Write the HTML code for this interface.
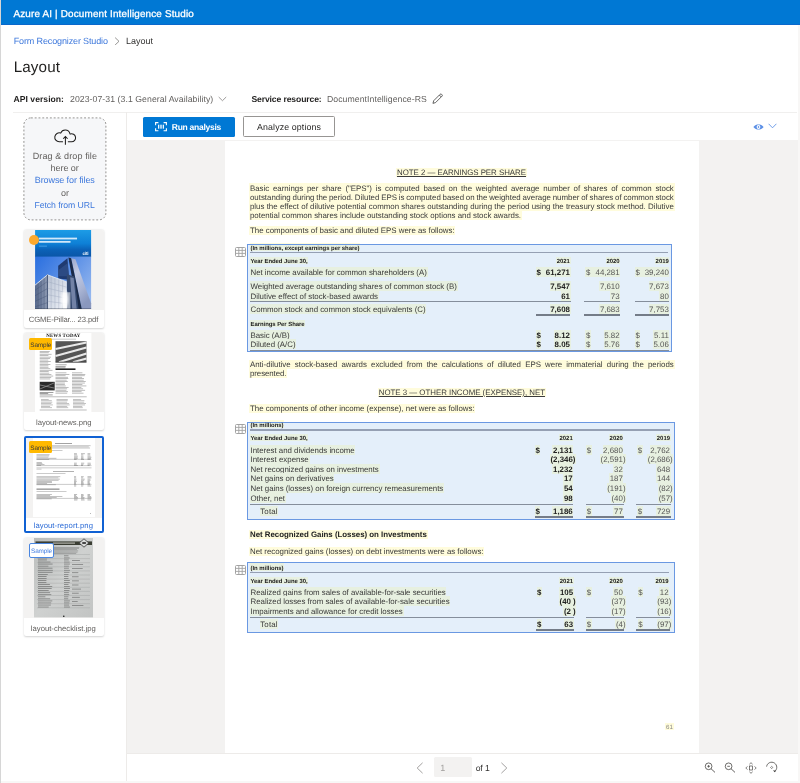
<!DOCTYPE html>
<html lang="en"><head><meta charset="utf-8"><title>Layout - Document Intelligence Studio</title>
<style>
html,body{margin:0;padding:0}
body{width:800px;height:783px;overflow:hidden;background:#f8f7f6;position:relative;font-family:"Liberation Sans",sans-serif}
.t{position:absolute;white-space:nowrap;text-rendering:geometricPrecision}
.b,svg{position:absolute}
.hl{position:absolute;background:#fffcdc}
.hg{position:absolute;background:#e7f0e0}
.tb{position:absolute;background:#e4effa;border:1px solid #6a98e2;box-sizing:border-box}
.r1{position:absolute;height:1px;background:#858e9b}
.r0{position:absolute;height:1.5px;background:#95a0b3}
.r2{position:absolute;height:1.8px;background:#747c88}
.card{position:absolute;background:#fff;border-radius:2px;box-shadow:0 0.5px 2px rgba(0,0,0,.18);overflow:hidden}
.ti{position:absolute;left:0;right:0;top:0;background:#f3f2f1}
.badge{position:absolute;border-radius:1.5px;box-sizing:border-box}
</style></head><body>
<div id="app" style="position:absolute;left:0;top:0;width:800px;height:783px;will-change:transform">
<div class="b" style="left:0;top:0;width:1px;height:783px;background:#d6d6d6"></div>
<div class="b" style="left:1px;top:0;width:796.5px;height:781px;background:#fff"></div>
<!-- header -->
<div class="b" style="left:1px;top:0;width:799px;height:25px;background:#0078d4;border-bottom:1px solid #0a68cc;box-sizing:border-box"></div>
<!-- dividers -->
<div class="b" style="left:13px;top:111.5px;width:784px;height:1px;background:#f0efee"></div>
<div class="b" style="left:126px;top:112px;width:1px;height:669px;background:#edebe9"></div>
<!-- viewer -->
<div class="b" style="left:127px;top:140.3px;width:670.5px;height:612.7px;background:#f3f2f1"></div>
<div class="b" style="left:225px;top:141px;width:473.5px;height:612px;background:#fff"></div>
<div class="b" style="left:127px;top:752.5px;width:670.5px;height:1px;background:#edebe9"></div>
<div class="hl" style="left:249.7px;top:242.6px;width:110.6px;height:2.2px"></div>
<div class="tb" style="left:247px;top:244.3px;width:425.1px;height:107.4px"></div>
<svg style="left:235px;top:246.5px" width="11" height="10" viewBox="0 0 11 10"><rect x="0.5" y="0.5" width="10" height="9" rx="1" fill="#fff" stroke="#a3a3a3" stroke-width="1"/><path d="M0.5 3.4H10.5M0.5 6.4H10.5M3.8 0.5V9.5M7.2 0.5V9.5" stroke="#a3a3a3" stroke-width="0.9" fill="none"/></svg>
<div class="hg" style="left:249.7px;top:245.3px;width:110.6px;height:6.2px"></div>
<div class="r0" style="left:250px;top:251.55px;width:418px"></div>
<div class="hg" style="left:536.6px;top:267.3px;width:23.299999999999955px;height:9.4px"></div>
<div class="hg" style="left:585.9px;top:267.3px;width:23.700000000000045px;height:9.4px"></div>
<div class="hg" style="left:635.4px;top:267.3px;width:23.399999999999977px;height:9.4px"></div>
<div class="r1" style="left:250px;top:301.1px;width:320.5px"></div>
<div class="r1" style="left:584.4px;top:301.1px;width:36.10000000000002px"></div>
<div class="r1" style="left:635px;top:301.1px;width:34px"></div>
<div class="r2" style="left:535.6px;top:314.2px;width:34.89999999999998px"></div>
<div class="r2" style="left:584.4px;top:314.2px;width:36.10000000000002px"></div>
<div class="r2" style="left:635px;top:314.2px;width:34px"></div>
<div class="r1" style="left:250px;top:349.8px;width:419px"></div>
<div class="hl" style="left:249.7px;top:420.2px;width:34.700000000000024px;height:2.5px"></div>
<div class="tb" style="left:247px;top:422.2px;width:427.5px;height:98.2px"></div>
<svg style="left:235px;top:423.9px" width="11" height="10" viewBox="0 0 11 10"><rect x="0.5" y="0.5" width="10" height="9" rx="1" fill="#fff" stroke="#a3a3a3" stroke-width="1"/><path d="M0.5 3.4H10.5M0.5 6.4H10.5M3.8 0.5V9.5M7.2 0.5V9.5" stroke="#a3a3a3" stroke-width="0.9" fill="none"/></svg>
<div class="hg" style="left:249.7px;top:423.2px;width:34.700000000000024px;height:5.3px"></div>
<div class="r0" style="left:250px;top:429.25px;width:419.70000000000005px"></div>
<div class="r1" style="left:250px;top:503.7px;width:323.29999999999995px"></div>
<div class="r1" style="left:585.7px;top:503.7px;width:38.09999999999991px"></div>
<div class="r1" style="left:636px;top:503.7px;width:34.60000000000002px"></div>
<div class="r2" style="left:534.7px;top:516.3px;width:38.799999999999955px"></div>
<div class="r2" style="left:585.7px;top:516.3px;width:38.09999999999991px"></div>
<div class="r2" style="left:636px;top:516.3px;width:34.60000000000002px"></div>
<div class="hl" style="left:249.7px;top:562.4px;width:34.700000000000024px;height:0.3px"></div>
<div class="tb" style="left:247px;top:562.2px;width:427.5px;height:70.5px"></div>
<svg style="left:235px;top:564.5px" width="11" height="10" viewBox="0 0 11 10"><rect x="0.5" y="0.5" width="10" height="9" rx="1" fill="#fff" stroke="#a3a3a3" stroke-width="1"/><path d="M0.5 3.4H10.5M0.5 6.4H10.5M3.8 0.5V9.5M7.2 0.5V9.5" stroke="#a3a3a3" stroke-width="0.9" fill="none"/></svg>
<div class="hg" style="left:249.7px;top:563.2px;width:34.700000000000024px;height:7.9px"></div>
<div class="r0" style="left:250px;top:571.55px;width:418.5px"></div>
<div class="r1" style="left:250px;top:616.8px;width:323.5px"></div>
<div class="r1" style="left:585.7px;top:616.8px;width:38.09999999999991px"></div>
<div class="r1" style="left:636px;top:616.8px;width:33.5px"></div>
<div class="r2" style="left:535.5px;top:629.4px;width:38.5px"></div>
<div class="r2" style="left:585.7px;top:629.4px;width:38.09999999999991px"></div>
<div class="r2" style="left:636px;top:629.4px;width:33.5px"></div>
<svg style="left:113.5px;top:36.6px" width="6" height="8.6" viewBox="0 0 6 8.6"><path d="M1.1 0.6L5 4.3L1.1 8" fill="none" stroke="#7a7876" stroke-width="0.8"/></svg>
<svg style="left:217.5px;top:95.9px" width="9" height="6" viewBox="0 0 9 6"><path d="M0.7 1L4.45 4.7L8.2 1" fill="none" stroke="#8a8886" stroke-width="0.85"/></svg>
<svg style="left:431.5px;top:92.9px" width="11.3" height="11.3" viewBox="0 0 12 12"><path d="M1 11L1.8 8.2L8.6 1.4a1.1 1.1 0 0 1 1.6 0l0.4 0.4a1.1 1.1 0 0 1 0 1.6L3.8 10.2Z M7.8 2.2L9.8 4.2" fill="none" stroke="#323130" stroke-width="0.8" stroke-linejoin="round"/></svg>
<div class="b" style="left:143px;top:116.5px;width:92px;height:20px;background:#0078d4;border-radius:1.5px"></div>
<svg style="left:155.4px;top:122.2px" width="12" height="9.4" viewBox="0 0 12 9.4"><path d="M0.6 3.2V0.6H3.4M8.6 0.6H11.4V3.2M11.4 6.2V8.8H8.6M3.4 8.8H0.6V6.2" fill="none" stroke="#fff" stroke-width="1.1"/><path d="M3.5 2.7V6.7M5.2 2.7V6.7M6.8 2.7V6.7M8.5 2.7V6.7" stroke="#fff" stroke-width="0.95"/></svg>
<div class="b" style="left:243.3px;top:116.4px;width:91.6px;height:20.2px;background:#fff;border:1px solid #979593;border-radius:1.5px;box-sizing:border-box"></div>
<svg style="left:753px;top:123.5px" width="11" height="6" viewBox="0 0 11 6"><path d="M0.4 3C2 1 3.6 0.45 5.5 0.45S9 1 10.6 3C9 5 7.4 5.55 5.5 5.55S2 5 0.4 3Z" fill="#5b8fe6"/><circle cx="5.5" cy="3" r="1.9" fill="#fff"/><circle cx="5.5" cy="3" r="0.75" fill="#2f6fd8"/></svg>
<svg style="left:768px;top:123.4px" width="9" height="6" viewBox="0 0 9 6"><path d="M0.6 0.8L4.5 4.8L8.4 0.8" fill="none" stroke="#4f86e2" stroke-width="0.8"/></svg>
<svg style="left:23px;top:116.5px" width="84" height="104" viewBox="0 0 84 104"><rect x="0.9" y="0.9" width="82" height="102" rx="7" fill="#f6f7f9" stroke="#8a8886" stroke-width="0.9" stroke-dasharray="1.9 1.9"/></svg>
<svg style="left:45px;top:122px" width="40" height="30" viewBox="0 0 40 30"><path d="M17.6 19.75H14.2A4.45 4.45 0 1 1 15.7 11.1A4.9 4.9 0 0 1 24.9 11.5L25.2 12A4 4 0 1 1 26.6 19.75H23.3" fill="none" stroke="#201f1e" stroke-width="1.05" stroke-linecap="round"/><path d="M20.4 22.75V14.9M18.2 16.75L20.4 14.55L22.6 16.75" fill="none" stroke="#201f1e" stroke-width="1.05"/></svg>
<svg style="left:416px;top:761.5px" width="8" height="12" viewBox="0 0 8 12"><path d="M6.6 0.8L1.2 6L6.6 11.2" fill="none" stroke="#8a8886" stroke-width="0.8"/></svg>
<svg style="left:500px;top:761.5px" width="8" height="12" viewBox="0 0 8 12"><path d="M1.4 0.8L6.8 6L1.4 11.2" fill="none" stroke="#8a8886" stroke-width="0.8"/></svg>
<div class="b" style="left:434px;top:757px;width:38px;height:20.3px;background:#f3f2f1;border-radius:1.5px"></div>
<svg style="left:702px;top:760px" width="16" height="15" viewBox="0 0 16 15"><circle cx="6.6" cy="6.3" r="3.35" fill="none" stroke="#484644" stroke-width="0.8"/><path d="M9 8.7L13 12.4" stroke="#484644" stroke-width="0.85"/><path d="M5.3 6.3H7.9M6.6 5V7.6" stroke="#484644" stroke-width="0.8"/></svg>
<svg style="left:722.3px;top:760px" width="16" height="15" viewBox="0 0 16 15"><circle cx="6.6" cy="6.3" r="3.35" fill="none" stroke="#484644" stroke-width="0.8"/><path d="M9 8.7L13 12.4" stroke="#484644" stroke-width="0.85"/><path d="M5.3 6.3H7.9" stroke="#484644" stroke-width="0.8"/></svg>
<svg style="left:745px;top:762px" width="12" height="12" viewBox="0 0 12 12"><rect x="4.4" y="4" width="3.2" height="4" fill="none" stroke="#484644" stroke-width="0.7"/><path d="M2.4 4.4L0.8 6L2.4 7.6M9.6 4.4L11.2 6L9.6 7.6M4.4 2.2L6 0.7L7.6 2.2M4.4 9.8L6 11.3L7.6 9.8" fill="none" stroke="#484644" stroke-width="0.7"/></svg>
<svg style="left:764.5px;top:761px" width="14" height="13" viewBox="0 0 14 13"><path d="M1.6 5.6A5.1 5.1 0 1 1 9.4 10.6" fill="none" stroke="#484644" stroke-width="0.8"/><path d="M8 9.3L9.6 11.2L11.3 9.8Z" fill="#484644"/><rect x="5.9" y="5.7" width="1.6" height="1.6" transform="rotate(45 6.7 6.5)" fill="none" stroke="#484644" stroke-width="0.6"/></svg>
<div class="card" style="left:23.7px;top:230px;width:79.9px;height:97.5px"><div class="ti" style="height:79.6px"></div><svg style="left:11.8px;top:0" width="56.2" height="79.3" viewBox="0 0 55.8 79">
<defs><linearGradient id="hb" x1="0" y1="0" x2="0" y2="1"><stop offset="0" stop-color="#1d9ce6"/><stop offset="0.5" stop-color="#0e80d6"/><stop offset="0.72" stop-color="#0b62b8"/><stop offset="1" stop-color="#0a55a6"/></linearGradient>
<linearGradient id="sky" x1="0" y1="0" x2="1" y2="0.7"><stop offset="0" stop-color="#2a6fdf"/><stop offset="0.5" stop-color="#5a8fe6"/><stop offset="1" stop-color="#93b6ee"/></linearGradient>
<linearGradient id="rf" x1="0" y1="0" x2="0.4" y2="1"><stop offset="0" stop-color="#9aa7cc"/><stop offset="0.35" stop-color="#c2cae2"/><stop offset="0.7" stop-color="#a9b4d3"/><stop offset="1" stop-color="#8a98be"/></linearGradient>
<linearGradient id="lf" x1="0" y1="0" x2="1" y2="0"><stop offset="0" stop-color="#56678a"/><stop offset="1" stop-color="#8e9bb3"/></linearGradient>
<linearGradient id="ff" x1="0" y1="0" x2="1" y2="1"><stop offset="0" stop-color="#b9c3d4"/><stop offset="0.6" stop-color="#d9dfe9"/><stop offset="1" stop-color="#f4f6fa"/></linearGradient>
<radialGradient id="glow" cx="0.5" cy="0.5" r="0.5"><stop offset="0" stop-color="#fff"/><stop offset="0.5" stop-color="#fff" stop-opacity="0.7"/><stop offset="1" stop-color="#fff" stop-opacity="0"/></radialGradient></defs>
<rect width="55.8" height="27" fill="url(#hb)"/>
<rect y="26.5" width="55.8" height="52.5" fill="url(#sky)"/>
<polygon points="23,35.6 32.2,28.1 34,49.5 23,48.4" fill="#1f3a70"/>
<polygon points="23,40 32.6,33 33.5,46 23,46" fill="#2f4f88" opacity="0.8"/>
<polygon points="35.9,28.1 40.2,29.2 52,62.4 55.8,73.1 55.8,79 46.6,79" fill="url(#rf)"/>
<polygon points="33.2,27.5 35.9,28.1 46.6,79 42.3,79" fill="#1b2a47"/>
<polygon points="31.6,44.2 39.1,46.3 43.4,79 31.6,79" fill="#34496f"/>
<polygon points="35,47 38.4,47.8 41.5,79 37,79" fill="#8796b8" opacity="0.75"/>
<polygon points="0,54.9 12.3,44.7 12.3,79 0,79" fill="url(#lf)"/>
<polygon points="12.3,44.7 31.6,51.7 31.6,79 12.3,79" fill="url(#ff)"/>
<path d="M0 54.9L12.3 44.7L31.6 51.7" fill="none" stroke="#e6eaf1" stroke-width="0.9"/>
<path d="M12.3 44.7V79" stroke="#3d4d6b" stroke-width="0.9"/>
<path d="M0 60L12 51.5M0 65.5L12 58.5M0 71L12 65.5M0 76.5L12 72.5M3 53V79M6 50.5V79M9 48V79" stroke="#3f4f6e" stroke-width="0.45" opacity="0.8"/>
<path d="M12.5 51.5L31.5 57M12.5 58L31.5 62.5M12.5 64.5L31.5 68M12.5 71L31.5 73.5M16 46.5V79M19.8 48V79M23.6 49.2V79M27.4 50.5V79" stroke="#8d9ab2" stroke-width="0.4" opacity="0.8"/>
<ellipse cx="29.5" cy="69" rx="5" ry="11" fill="url(#glow)"/>
<rect x="27.2" y="62" width="8" height="17" fill="#fff" opacity="0.55"/>
<path d="M0 78.6h55.8" stroke="#2b3547" stroke-width="0.8" opacity="0.7"/>
<rect x="3.8" y="7.6" width="38" height="1.8" fill="#e3f1fc" opacity="0.92"/><rect x="3.8" y="10.9" width="31.5" height="1.8" fill="#e3f1fc" opacity="0.92"/><rect x="3.8" y="15.6" width="8" height="0.9" fill="#49a5ec"/>
</svg><div class="b" style="left:5.3px;top:4.9px;width:10.2px;height:10.2px;border-radius:5.1px;background:#ffaa2c"></div></div>
<div class="card" style="left:23.7px;top:333.2px;width:79.9px;height:97.1px"><div class="ti" style="height:79.2px"></div><svg style="left:11.6px;top:0" width="56.4" height="79.2" viewBox="0 0 56.4 79.2"><rect width="56.4" height="79.2" fill="#fff"/><rect x="20.5" y="8.2" width="31" height="21" fill="#555"/><g stroke="#e8e8e8" stroke-width="2.2"><path d="M20.5 16L51.5 9.5M20.5 23L51.5 14.5M24 29.2L51.5 20.5M38 29.2L51.5 25.5"/></g><path d="M20.5 29.2h31" stroke="#333" stroke-width="0.8"/><rect x="4.7" y="48.8" width="15" height="8.6" fill="#2b2b2b"/><path d="M5 56L19 50M5 52L19 55" stroke="#999" stroke-width="0.7"/><g fill="#555" opacity="0.55"><rect x="4.7" y="18.0" width="10.1" height="0.7" /><rect x="4.7" y="19.4" width="9.1" height="0.7" /><rect x="4.7" y="20.9" width="11.9" height="0.7" /><rect x="4.7" y="22.3" width="8.7" height="0.7" /><rect x="4.7" y="23.8" width="11.2" height="0.7" /><rect x="4.7" y="25.2" width="10.3" height="0.7" /><rect x="4.7" y="26.7" width="8.6" height="0.7" /><rect x="4.7" y="28.1" width="11.1" height="0.7" /><rect x="4.7" y="29.6" width="8.5" height="0.7" /><rect x="4.7" y="31.0" width="10.7" height="0.7" /><rect x="4.7" y="32.5" width="8.7" height="0.7" /><rect x="4.7" y="33.9" width="8.8" height="0.7" /><rect x="4.7" y="35.4" width="10.6" height="0.7" /><rect x="4.7" y="36.9" width="12.8" height="0.7" /><rect x="4.7" y="38.3" width="9.0" height="0.7" /><rect x="4.7" y="39.8" width="9.5" height="0.7" /><rect x="4.7" y="41.2" width="11.7" height="0.7" /><rect x="4.7" y="42.7" width="13.5" height="0.7" /><rect x="4.7" y="44.1" width="11.5" height="0.7" /><rect x="4.7" y="45.6" width="10.5" height="0.7" /></g><g fill="#555" opacity="0.8"><rect x="4.7" y="59.0" width="13.7" height="0.7" /><rect x="4.7" y="60.3" width="8.5" height="0.7" /><rect x="4.7" y="61.6" width="13.0" height="0.7" /></g><g fill="#555" opacity="0.7"><rect x="20.5" y="31.5" width="11.1" height="0.7" /><rect x="20.5" y="33.0" width="10.2" height="0.7" /><rect x="20.5" y="34.5" width="10.0" height="0.7" /></g><rect x="20.5" y="35.4" width="20" height="1.6" fill="#222"/><g fill="#555" opacity="0.55"><rect x="20.5" y="39.5" width="10.9" height="0.7" /><rect x="20.5" y="41.0" width="13.9" height="0.7" /><rect x="20.5" y="42.4" width="10.1" height="0.7" /><rect x="20.5" y="43.9" width="12.5" height="0.7" /><rect x="20.5" y="45.3" width="12.8" height="0.7" /><rect x="20.5" y="46.8" width="11.2" height="0.7" /><rect x="20.5" y="48.2" width="12.3" height="0.7" /><rect x="20.5" y="49.7" width="9.4" height="0.7" /><rect x="20.5" y="51.1" width="9.4" height="0.7" /><rect x="20.5" y="52.6" width="10.2" height="0.7" /><rect x="20.5" y="54.0" width="13.1" height="0.7" /><rect x="20.5" y="55.5" width="11.6" height="0.7" /><rect x="20.5" y="56.9" width="10.9" height="0.7" /><rect x="20.5" y="58.4" width="12.5" height="0.7" /><rect x="20.5" y="59.8" width="11.7" height="0.7" /></g><g fill="#555" opacity="0.55"><rect x="37.0" y="39.5" width="10.4" height="0.7" /><rect x="37.0" y="41.0" width="13.3" height="0.7" /><rect x="37.0" y="42.4" width="12.8" height="0.7" /><rect x="37.0" y="43.9" width="10.1" height="0.7" /><rect x="37.0" y="45.3" width="12.0" height="0.7" /><rect x="37.0" y="46.8" width="11.7" height="0.7" /><rect x="37.0" y="48.2" width="13.8" height="0.7" /><rect x="37.0" y="49.7" width="12.9" height="0.7" /><rect x="37.0" y="51.1" width="10.4" height="0.7" /><rect x="37.0" y="52.6" width="14.4" height="0.7" /><rect x="37.0" y="54.0" width="9.4" height="0.7" /><rect x="37.0" y="55.5" width="11.1" height="0.7" /><rect x="37.0" y="56.9" width="13.1" height="0.7" /><rect x="37.0" y="58.4" width="9.6" height="0.7" /><rect x="37.0" y="59.8" width="11.5" height="0.7" /></g><path d="M4.7 63.8h47M4.7 77h47" stroke="#777" stroke-width="0.5"/><g fill="#555" opacity="0.5"><rect x="6.0" y="66.0" width="7.7" height="0.7" /><rect x="6.0" y="67.4" width="10.8" height="0.7" /><rect x="6.0" y="68.8" width="11.3" height="0.7" /><rect x="6.0" y="70.2" width="10.4" height="0.7" /><rect x="6.0" y="71.6" width="11.9" height="0.7" /><rect x="6.0" y="73.0" width="9.1" height="0.7" /><rect x="6.0" y="74.4" width="11.0" height="0.7" /></g><g fill="#555" opacity="0.5"><rect x="21.5" y="66.0" width="11.3" height="0.7" /><rect x="21.5" y="67.4" width="11.2" height="0.7" /><rect x="21.5" y="68.8" width="10.6" height="0.7" /><rect x="21.5" y="70.2" width="12.6" height="0.7" /><rect x="21.5" y="71.6" width="13.2" height="0.7" /><rect x="21.5" y="73.0" width="10.7" height="0.7" /><rect x="21.5" y="74.4" width="11.7" height="0.7" /></g><g fill="#555" opacity="0.5"><rect x="38.0" y="66.0" width="8.1" height="0.7" /><rect x="38.0" y="67.4" width="11.4" height="0.7" /><rect x="38.0" y="68.8" width="11.2" height="0.7" /><rect x="38.0" y="70.2" width="13.0" height="0.7" /><rect x="38.0" y="71.6" width="12.1" height="0.7" /><rect x="38.0" y="73.0" width="9.3" height="0.7" /><rect x="38.0" y="74.4" width="9.8" height="0.7" /></g><path d="M11 6.2h30" stroke="#888" stroke-width="0.45"/></svg></div>
<div class="card" style="left:23.7px;top:435.7px;width:79.9px;height:97.1px;box-shadow:none;border:2px solid #1061d3;box-sizing:border-box;border-radius:2px"><div class="ti" style="height:80.3px"></div><svg style="left:6.9px;top:0.4px" width="62.5" height="79" viewBox="0 0 62.5 79"><rect width="62.5" height="79" fill="#fff"/><rect x="22" y="5.3" width="17" height="0.7" fill="#444" opacity=".7"/><g fill="#555" opacity="0.55"><rect x="3.5" y="7.5" width="54.1" height="0.6" /><rect x="3.5" y="8.6" width="52.3" height="0.6" /><rect x="3.5" y="9.7" width="53.5" height="0.6" /></g><rect x="3.5" y="12.2" width="26" height="0.6" fill="#555" opacity=".5"/><g fill="#555" opacity="0.6"><rect x="3.5" y="16.5" width="13.1" height="0.6" /><rect x="3.5" y="17.6" width="12.6" height="0.6" /><rect x="3.5" y="18.8" width="11.9" height="0.6" /><rect x="3.5" y="19.9" width="19.9" height="0.6" /><rect x="3.5" y="21.1" width="12.7" height="0.6" /></g><g fill="#555" opacity="0.6"><rect x="3.5" y="24.0" width="5.3" height="0.6" /><rect x="3.5" y="25.1" width="5.9" height="0.6" /><rect x="3.5" y="26.2" width="8.0" height="0.6" /><rect x="3.5" y="27.3" width="4.6" height="0.6" /></g><path d="M3.5 21.3h55M3.5 27.6h55" stroke="#666" stroke-width="0.35"/><g fill="#555" opacity="0.65"><rect x="41.0" y="15.5" width="2.9" height="0.6" /><rect x="41.0" y="16.6" width="3.1" height="0.6" /><rect x="41.0" y="17.8" width="3.8" height="0.6" /><rect x="41.0" y="18.9" width="3.6" height="0.6" /><rect x="41.0" y="20.1" width="3.7" height="0.6" /><rect x="41.0" y="21.2" width="2.6" height="0.6" /></g><g fill="#555" opacity="0.65"><rect x="41.0" y="24.8" width="2.8" height="0.6" /><rect x="41.0" y="25.9" width="2.7" height="0.6" /><rect x="41.0" y="27.0" width="3.8" height="0.6" /></g><g fill="#555" opacity="0.65"><rect x="48.0" y="15.5" width="3.9" height="0.6" /><rect x="48.0" y="16.6" width="2.3" height="0.6" /><rect x="48.0" y="17.8" width="2.4" height="0.6" /><rect x="48.0" y="18.9" width="2.5" height="0.6" /><rect x="48.0" y="20.1" width="2.5" height="0.6" /><rect x="48.0" y="21.2" width="3.0" height="0.6" /></g><g fill="#555" opacity="0.65"><rect x="48.0" y="24.8" width="3.2" height="0.6" /><rect x="48.0" y="25.9" width="2.5" height="0.6" /><rect x="48.0" y="27.0" width="2.0" height="0.6" /></g><g fill="#555" opacity="0.65"><rect x="54.5" y="15.5" width="2.8" height="0.6" /><rect x="54.5" y="16.6" width="2.7" height="0.6" /><rect x="54.5" y="17.8" width="3.1" height="0.6" /><rect x="54.5" y="18.9" width="3.9" height="0.6" /><rect x="54.5" y="20.1" width="3.4" height="0.6" /><rect x="54.5" y="21.2" width="3.0" height="0.6" /></g><g fill="#555" opacity="0.65"><rect x="54.5" y="24.8" width="3.2" height="0.6" /><rect x="54.5" y="25.9" width="3.4" height="0.6" /><rect x="54.5" y="27.0" width="2.1" height="0.6" /></g><rect x="3.5" y="29.6" width="55" height="0.6" fill="#555" opacity=".5"/><rect x="3.5" y="30.8" width="5" height="0.6" fill="#555" opacity=".5"/><rect x="20" y="33.3" width="21" height="0.7" fill="#444" opacity=".6"/><rect x="3.5" y="35.4" width="29" height="0.6" fill="#555" opacity=".5"/><g fill="#555" opacity="0.6"><rect x="3.5" y="38.5" width="23.8" height="0.6" /><rect x="3.5" y="39.6" width="21.9" height="0.6" /><rect x="3.5" y="40.8" width="23.4" height="0.6" /><rect x="3.5" y="41.9" width="22.1" height="0.6" /><rect x="3.5" y="43.1" width="15.4" height="0.6" /><rect x="3.5" y="44.2" width="15.5" height="0.6" /><rect x="3.5" y="45.4" width="10.6" height="0.6" /><rect x="3.5" y="46.5" width="19.4" height="0.6" /></g><g fill="#555" opacity="0.65"><rect x="41.0" y="38.5" width="2.1" height="0.6" /><rect x="41.0" y="39.6" width="2.1" height="0.6" /><rect x="41.0" y="40.8" width="2.4" height="0.6" /><rect x="41.0" y="41.9" width="2.3" height="0.6" /><rect x="41.0" y="43.1" width="2.7" height="0.6" /><rect x="41.0" y="44.2" width="2.1" height="0.6" /><rect x="41.0" y="45.4" width="2.0" height="0.6" /><rect x="41.0" y="46.5" width="2.3" height="0.6" /><rect x="41.0" y="47.7" width="2.2" height="0.6" /></g><g fill="#555" opacity="0.65"><rect x="48.0" y="38.5" width="2.7" height="0.6" /><rect x="48.0" y="39.6" width="2.1" height="0.6" /><rect x="48.0" y="40.8" width="3.7" height="0.6" /><rect x="48.0" y="41.9" width="3.2" height="0.6" /><rect x="48.0" y="43.1" width="2.3" height="0.6" /><rect x="48.0" y="44.2" width="2.5" height="0.6" /><rect x="48.0" y="45.4" width="2.7" height="0.6" /><rect x="48.0" y="46.5" width="2.7" height="0.6" /><rect x="48.0" y="47.7" width="2.2" height="0.6" /></g><g fill="#555" opacity="0.65"><rect x="54.5" y="38.5" width="3.7" height="0.6" /><rect x="54.5" y="39.6" width="4.0" height="0.6" /><rect x="54.5" y="40.8" width="2.9" height="0.6" /><rect x="54.5" y="41.9" width="3.0" height="0.6" /><rect x="54.5" y="43.1" width="2.2" height="0.6" /><rect x="54.5" y="44.2" width="2.2" height="0.6" /><rect x="54.5" y="45.4" width="2.7" height="0.6" /><rect x="54.5" y="46.5" width="2.5" height="0.6" /><rect x="54.5" y="47.7" width="3.7" height="0.6" /></g><path d="M3.5 46.4h55" stroke="#666" stroke-width="0.35"/><rect x="3.5" y="50.7" width="23" height="0.8" fill="#222" opacity=".8"/><rect x="3.5" y="53" width="30" height="0.6" fill="#555" opacity=".5"/><g fill="#555" opacity="0.6"><rect x="3.5" y="56.0" width="15.4" height="0.6" /><rect x="3.5" y="57.1" width="13.6" height="0.6" /><rect x="3.5" y="58.3" width="25.9" height="0.6" /><rect x="3.5" y="59.4" width="20.2" height="0.6" /><rect x="3.5" y="60.6" width="15.2" height="0.6" /></g><g fill="#555" opacity="0.65"><rect x="41.0" y="56.0" width="3.1" height="0.6" /><rect x="41.0" y="57.1" width="2.1" height="0.6" /><rect x="41.0" y="58.3" width="3.1" height="0.6" /><rect x="41.0" y="59.4" width="4.0" height="0.6" /><rect x="41.0" y="60.6" width="3.7" height="0.6" /><rect x="41.0" y="61.7" width="3.4" height="0.6" /></g><g fill="#555" opacity="0.65"><rect x="48.0" y="56.0" width="2.5" height="0.6" /><rect x="48.0" y="57.1" width="2.7" height="0.6" /><rect x="48.0" y="58.3" width="2.3" height="0.6" /><rect x="48.0" y="59.4" width="3.5" height="0.6" /><rect x="48.0" y="60.6" width="3.1" height="0.6" /><rect x="48.0" y="61.7" width="3.6" height="0.6" /></g><g fill="#555" opacity="0.65"><rect x="54.5" y="56.0" width="2.7" height="0.6" /><rect x="54.5" y="57.1" width="2.4" height="0.6" /><rect x="54.5" y="58.3" width="3.6" height="0.6" /><rect x="54.5" y="59.4" width="4.0" height="0.6" /><rect x="54.5" y="60.6" width="3.7" height="0.6" /><rect x="54.5" y="61.7" width="3.6" height="0.6" /></g><path d="M3.5 60.4h55" stroke="#666" stroke-width="0.35"/><rect x="57" y="75" width="1" height="0.6" fill="#888"/></svg></div>
<div class="card" style="left:23.7px;top:538.4px;width:79.9px;height:97.7px"><div class="ti" style="height:79.4px"></div><svg style="left:9.9px;top:0" width="59.7" height="79.4" viewBox="0 0 59.7 79.4"><defs><linearGradient id="sc" x1="0" y1="0" x2="1" y2="1"><stop offset="0" stop-color="#b9bcbb"/><stop offset="0.5" stop-color="#cfd1d0"/><stop offset="1" stop-color="#c2c4c3"/></linearGradient></defs><rect width="59.7" height="79.4" fill="url(#sc)"/><rect x="1.5" y="3.4" width="56.5" height="3.6" fill="#3a3d33"/><rect x="19" y="4.5" width="22" height="1.2" fill="#cfd0c8" opacity=".8"/><polygon points="50,0.8 54.8,5 50,9.2 45.2,5" fill="#d9dbda" stroke="#222" stroke-width="0.7"/><rect x="48.3" y="4.2" width="3.6" height="1.6" fill="#222"/><g fill="#444" opacity="0.5"><rect x="20.0" y="9.0" width="25.3" height="0.6" /><rect x="20.0" y="10.2" width="25.0" height="0.6" /><rect x="20.0" y="11.4" width="23.0" height="0.6" /><rect x="20.0" y="12.6" width="24.1" height="0.6" /><rect x="20.0" y="13.8" width="23.5" height="0.6" /><rect x="20.0" y="15.0" width="22.2" height="0.6" /></g><g fill="#333" opacity="0.6"><rect x="4.0" y="17.5" width="7.0" height="0.7" /><rect x="4.0" y="19.6" width="9.1" height="0.7" /><rect x="4.0" y="21.6" width="8.9" height="0.7" /><rect x="4.0" y="23.7" width="12.5" height="0.7" /><rect x="4.0" y="25.7" width="14.6" height="0.7" /><rect x="4.0" y="27.8" width="10.4" height="0.7" /><rect x="4.0" y="29.8" width="14.5" height="0.7" /><rect x="4.0" y="31.9" width="14.9" height="0.7" /><rect x="4.0" y="33.9" width="14.6" height="0.7" /><rect x="4.0" y="36.0" width="9.8" height="0.7" /><rect x="4.0" y="38.0" width="8.6" height="0.7" /><rect x="4.0" y="40.0" width="8.6" height="0.7" /><rect x="4.0" y="42.1" width="8.4" height="0.7" /><rect x="4.0" y="44.1" width="8.4" height="0.7" /><rect x="4.0" y="46.2" width="11.9" height="0.7" /><rect x="4.0" y="48.2" width="14.2" height="0.7" /><rect x="4.0" y="50.3" width="13.7" height="0.7" /><rect x="4.0" y="52.3" width="10.7" height="0.7" /><rect x="4.0" y="54.4" width="12.1" height="0.7" /><rect x="4.0" y="56.4" width="13.3" height="0.7" /><rect x="4.0" y="58.5" width="7.4" height="0.7" /><rect x="4.0" y="60.5" width="12.2" height="0.7" /><rect x="4.0" y="62.6" width="14.3" height="0.7" /><rect x="4.0" y="64.6" width="13.2" height="0.7" /><rect x="4.0" y="66.7" width="12.9" height="0.7" /><rect x="4.0" y="68.7" width="10.7" height="0.7" /></g><g fill="#333" opacity="0.6"><rect x="30.0" y="17.5" width="4.5" height="0.7" /><rect x="30.0" y="19.6" width="5.6" height="0.7" /><rect x="30.0" y="21.6" width="4.8" height="0.7" /><rect x="30.0" y="23.7" width="5.6" height="0.7" /><rect x="30.0" y="25.7" width="5.9" height="0.7" /><rect x="30.0" y="27.8" width="4.9" height="0.7" /><rect x="30.0" y="29.8" width="4.9" height="0.7" /><rect x="30.0" y="31.9" width="5.9" height="0.7" /><rect x="30.0" y="33.9" width="5.5" height="0.7" /><rect x="30.0" y="36.0" width="4.5" height="0.7" /><rect x="30.0" y="38.0" width="4.4" height="0.7" /><rect x="30.0" y="40.0" width="4.5" height="0.7" /><rect x="30.0" y="42.1" width="5.8" height="0.7" /><rect x="30.0" y="44.1" width="5.7" height="0.7" /><rect x="30.0" y="46.2" width="4.5" height="0.7" /><rect x="30.0" y="48.2" width="5.7" height="0.7" /><rect x="30.0" y="50.3" width="6.0" height="0.7" /><rect x="30.0" y="52.3" width="5.4" height="0.7" /><rect x="30.0" y="54.4" width="4.8" height="0.7" /><rect x="30.0" y="56.4" width="5.2" height="0.7" /><rect x="30.0" y="58.5" width="4.4" height="0.7" /><rect x="30.0" y="60.5" width="4.2" height="0.7" /><rect x="30.0" y="62.6" width="5.9" height="0.7" /><rect x="30.0" y="64.6" width="5.4" height="0.7" /><rect x="30.0" y="66.7" width="5.1" height="0.7" /><rect x="30.0" y="68.7" width="5.9" height="0.7" /></g><g fill="#333" opacity="0.5"><rect x="38.0" y="22.0" width="7.9" height="0.8" /><rect x="38.0" y="26.1" width="11.1" height="0.8" /><rect x="38.0" y="30.2" width="10.7" height="0.8" /><rect x="38.0" y="34.3" width="6.3" height="0.8" /><rect x="38.0" y="38.4" width="6.6" height="0.8" /><rect x="38.0" y="42.5" width="6.9" height="0.8" /><rect x="38.0" y="46.6" width="6.5" height="0.8" /><rect x="38.0" y="50.7" width="9.0" height="0.8" /><rect x="38.0" y="54.8" width="6.7" height="0.8" /><rect x="38.0" y="58.9" width="7.8" height="0.8" /><rect x="38.0" y="63.0" width="5.7" height="0.8" /><rect x="38.0" y="67.1" width="11.4" height="0.8" /></g><g stroke="#8f9291" stroke-width="0.3"><path d="M3 16.5h53"/><path d="M3 20.6h53"/><path d="M3 24.7h53"/><path d="M3 28.8h53"/><path d="M3 32.9h53"/><path d="M3 37.0h53"/><path d="M3 41.1h53"/><path d="M3 45.2h53"/><path d="M3 49.3h53"/><path d="M3 53.4h53"/><path d="M3 57.5h53"/><path d="M3 61.6h53"/><path d="M3 65.7h53"/><path d="M3 69.8h53"/></g><circle cx="29.8" cy="78.2" r="0.8" fill="#111"/></svg></div>
<div class="badge" style="left:29.1px;top:338.2px;width:23.2px;height:12px;background:#ffb900"></div>
<div class="badge" style="left:29.1px;top:441px;width:23.2px;height:12px;background:#ffb900"></div>
<div class="badge" style="left:29.1px;top:543.4px;width:24.6px;height:14.2px;background:#fff;border:1px solid #4a86e0;border-radius:2px"></div>
<span class="t" style="left:13.50px;top:9.00px;font-size:9.9px;line-height:11.88px;color:#fff;letter-spacing:0.170px;-webkit-text-stroke:0.3px #fff;">Azure AI | Document Intelligence Studio</span>
<span class="t" style="left:13.70px;top:36.00px;font-size:9.0px;line-height:10.8px;color:#3d78dc;letter-spacing:-0.131px;">Form Recognizer Studio</span>
<span class="t" style="left:126.00px;top:36.00px;font-size:9.0px;line-height:10.8px;color:#323130;letter-spacing:-0.006px;">Layout</span>
<span class="t" style="left:13.70px;top:59.00px;font-size:15.2px;line-height:18.24px;color:#201f1e;letter-spacing:0.138px;">Layout</span>
<span class="t" style="left:13.50px;top:94.00px;font-size:8.6px;line-height:10.32px;color:#201f1e;font-weight:bold;letter-spacing:0.031px;">API version:</span>
<span class="t" style="left:70.00px;top:94.00px;font-size:8.7px;line-height:10.44px;color:#605e5c;letter-spacing:0.065px;">2023-07-31 (3.1 General Availability)</span>
<span class="t" style="left:251.40px;top:94.00px;font-size:8.6px;line-height:10.32px;color:#201f1e;font-weight:bold;letter-spacing:-0.115px;">Service resource:</span>
<span class="t" style="left:327.00px;top:94.00px;font-size:8.7px;line-height:10.44px;color:#605e5c;letter-spacing:0.058px;">DocumentIntelligence-RS</span>
<span class="t" style="left:32.70px;top:151.00px;font-size:9.0px;line-height:10.8px;color:#605e5c;letter-spacing:0.118px;">Drag &amp; drop file</span>
<span class="t" style="left:50.60px;top:163.00px;font-size:9.0px;line-height:10.8px;color:#605e5c;letter-spacing:-0.072px;">here or</span>
<span class="t" style="left:34.80px;top:175.00px;font-size:9.0px;line-height:10.8px;color:#3d78dc;letter-spacing:-0.102px;">Browse for files</span>
<span class="t" style="left:61.00px;top:188.00px;font-size:9.0px;line-height:10.8px;color:#605e5c;letter-spacing:-0.016px;">or</span>
<span class="t" style="left:34.50px;top:200.00px;font-size:8.7px;line-height:10.44px;color:#3d78dc;letter-spacing:-0.078px;">Fetch from URL</span>
<span class="t" style="left:171.80px;top:122.00px;font-size:8.5px;line-height:10.2px;color:#fff;font-weight:bold;letter-spacing:-0.267px;">Run analysis</span>
<span class="t" style="left:257.00px;top:122.00px;font-size:8.8px;line-height:10.56px;color:#201f1e;letter-spacing:0.135px;">Analyze options</span>
<span class="t" style="left:440.20px;top:763.00px;font-size:9.0px;line-height:10.8px;color:#a19f9d;">1</span>
<span class="t" style="left:475.70px;top:763.00px;font-size:8.6px;line-height:10.32px;color:#323130;letter-spacing:-0.115px;">of 1</span>
<span class="t" style="left:396.20px;top:167.60px;font-size:7.88px;line-height:9px;color:#3a3a3a;background:#fffcdc;padding:0.40px 0.8px 0.10px;letter-spacing:-0.020px;text-decoration:underline;">NOTE 2 — EARNINGS PER SHARE</span>
<span class="t" style="left:249.20px;top:182.80px;font-size:7.88px;line-height:9px;color:#3a3a3a;background:#fffcdc;padding:1.20px 0.8px 0.10px;word-spacing:1.529px;">Basic earnings per share ("EPS") is computed based on the weighted average number of shares of common stock</span>
<span class="t" style="left:249.20px;top:192.60px;font-size:7.88px;line-height:9px;color:#3a3a3a;background:#fffcdc;padding:0.40px 0.8px 0.10px;word-spacing:-0.387px;">outstanding during the period. Diluted EPS is computed based on the weighted average number of shares of common stock</span>
<span class="t" style="left:249.20px;top:201.60px;font-size:7.88px;line-height:9px;color:#3a3a3a;background:#fffcdc;padding:0.40px 0.8px 0.10px;word-spacing:0.063px;">plus the effect of dilutive potential common shares outstanding during the period using the treasury stock method. Dilutive</span>
<span class="t" style="left:249.20px;top:210.60px;font-size:7.88px;line-height:9px;color:#3a3a3a;background:#fffcdc;padding:0.40px 0.8px 0.10px;letter-spacing:-0.011px;">potential common shares include outstanding stock options and stock awards.</span>
<span class="t" style="left:249.20px;top:225.60px;font-size:7.88px;line-height:9px;color:#3a3a3a;background:#fffcdc;padding:0.40px 0.8px 0.10px;letter-spacing:-0.003px;">The components of basic and diluted EPS were as follows:</span>
<span class="t" style="left:249.90px;top:243.80px;font-size:5.95px;line-height:4px;color:#222;padding:3.20px 0.6px 0.50px;font-weight:bold;letter-spacing:-0.031px;">(In millions, except earnings per share)</span>
<span class="t" style="left:249.90px;top:256.80px;font-size:5.95px;line-height:4px;color:#222;background:#e7f0e0;padding:3.20px 0.6px 0.50px;font-weight:bold;letter-spacing:-0.036px;">Year Ended June 30,</span>
<span class="t" style="right:229.50px;top:256.80px;font-size:5.95px;line-height:4px;color:#222;background:#e7f0e0;padding:3.20px 0.6px 0.50px;font-weight:bold;">2021</span>
<span class="t" style="right:179.80px;top:256.80px;font-size:5.95px;line-height:4px;color:#222;background:#e7f0e0;padding:3.20px 0.6px 0.50px;font-weight:bold;">2020</span>
<span class="t" style="right:130.60px;top:256.80px;font-size:5.95px;line-height:4px;color:#222;background:#e7f0e0;padding:3.20px 0.6px 0.50px;font-weight:bold;">2019</span>
<span class="t" style="left:249.70px;top:267.30px;font-size:7.88px;line-height:7px;color:#3a3a3a;background:#e7f0e0;padding:1.70px 0.8px 0.70px;letter-spacing:-0.020px;">Net income available for common shareholders (A)</span>
<span class="t" style="right:229.50px;top:267.30px;font-size:7.88px;line-height:7px;color:#222;background:#e7f0e0;padding:1.70px 0.6px 0.70px;font-weight:bold;">61,271</span>
<span class="t" style="right:179.80px;top:267.30px;font-size:7.88px;line-height:7px;color:#555;background:#e7f0e0;padding:1.70px 0.6px 0.70px;">44,281</span>
<span class="t" style="right:130.60px;top:267.30px;font-size:7.88px;line-height:7px;color:#555;background:#e7f0e0;padding:1.70px 0.6px 0.70px;">39,240</span>
<span class="t" style="left:536.10px;top:267.30px;font-size:7.88px;line-height:7px;color:#222;background:#e7f0e0;padding:1.70px 0.5px 0.70px;font-weight:bold;">$</span>
<span class="t" style="left:585.40px;top:267.30px;font-size:7.88px;line-height:7px;color:#555;background:#e7f0e0;padding:1.70px 0.5px 0.70px;">$</span>
<span class="t" style="left:634.90px;top:267.30px;font-size:7.88px;line-height:7px;color:#555;background:#e7f0e0;padding:1.70px 0.5px 0.70px;">$</span>
<span class="t" style="left:249.70px;top:281.30px;font-size:7.88px;line-height:7px;color:#3a3a3a;background:#e7f0e0;padding:1.70px 0.8px 0.70px;letter-spacing:-0.011px;">Weighted average outstanding shares of common stock (B)</span>
<span class="t" style="right:229.50px;top:281.30px;font-size:7.88px;line-height:7px;color:#222;background:#e7f0e0;padding:1.70px 0.6px 0.70px;font-weight:bold;">7,547</span>
<span class="t" style="right:179.80px;top:281.30px;font-size:7.88px;line-height:7px;color:#555;background:#e7f0e0;padding:1.70px 0.6px 0.70px;">7,610</span>
<span class="t" style="right:130.60px;top:281.30px;font-size:7.88px;line-height:7px;color:#555;background:#e7f0e0;padding:1.70px 0.6px 0.70px;">7,673</span>
<span class="t" style="left:249.70px;top:291.30px;font-size:7.88px;line-height:7px;color:#3a3a3a;background:#e7f0e0;padding:1.70px 0.8px 0.70px;letter-spacing:-0.017px;">Dilutive effect of stock-based awards</span>
<span class="t" style="right:229.50px;top:291.30px;font-size:7.88px;line-height:7px;color:#222;background:#e7f0e0;padding:1.70px 0.6px 0.70px;font-weight:bold;">61</span>
<span class="t" style="right:179.80px;top:291.30px;font-size:7.88px;line-height:7px;color:#555;background:#e7f0e0;padding:1.70px 0.6px 0.70px;">73</span>
<span class="t" style="right:130.60px;top:291.30px;font-size:7.88px;line-height:7px;color:#555;background:#e7f0e0;padding:1.70px 0.6px 0.70px;">80</span>
<span class="t" style="left:249.70px;top:304.30px;font-size:7.88px;line-height:7px;color:#3a3a3a;background:#e7f0e0;padding:1.70px 0.8px 0.70px;letter-spacing:-0.019px;">Common stock and common stock equivalents (C)</span>
<span class="t" style="right:229.50px;top:304.30px;font-size:7.88px;line-height:7px;color:#222;background:#e7f0e0;padding:1.70px 0.6px 0.70px;font-weight:bold;">7,608</span>
<span class="t" style="right:179.80px;top:304.30px;font-size:7.88px;line-height:7px;color:#555;background:#e7f0e0;padding:1.70px 0.6px 0.70px;">7,683</span>
<span class="t" style="right:130.60px;top:304.30px;font-size:7.88px;line-height:7px;color:#555;background:#e7f0e0;padding:1.70px 0.6px 0.70px;">7,753</span>
<span class="t" style="left:249.90px;top:319.80px;font-size:5.95px;line-height:4px;color:#222;background:#e7f0e0;padding:3.20px 0.6px 0.50px;font-weight:bold;letter-spacing:-0.039px;">Earnings Per Share</span>
<span class="t" style="left:249.70px;top:330.30px;font-size:7.88px;line-height:7px;color:#3a3a3a;background:#e7f0e0;padding:1.70px 0.8px 0.70px;letter-spacing:-0.028px;">Basic (A/B)</span>
<span class="t" style="right:229.50px;top:330.30px;font-size:7.88px;line-height:7px;color:#222;background:#e7f0e0;padding:1.70px 0.6px 0.70px;font-weight:bold;">8.12</span>
<span class="t" style="right:179.80px;top:330.30px;font-size:7.88px;line-height:7px;color:#555;background:#e7f0e0;padding:1.70px 0.6px 0.70px;">5.82</span>
<span class="t" style="right:130.60px;top:330.30px;font-size:7.88px;line-height:7px;color:#555;background:#e7f0e0;padding:1.70px 0.6px 0.70px;">5.11</span>
<span class="t" style="left:536.10px;top:330.30px;font-size:7.88px;line-height:7px;color:#222;background:#e7f0e0;padding:1.70px 0.5px 0.70px;font-weight:bold;">$</span>
<span class="t" style="left:585.40px;top:330.30px;font-size:7.88px;line-height:7px;color:#555;background:#e7f0e0;padding:1.70px 0.5px 0.70px;">$</span>
<span class="t" style="left:634.90px;top:330.30px;font-size:7.88px;line-height:7px;color:#555;background:#e7f0e0;padding:1.70px 0.5px 0.70px;">$</span>
<span class="t" style="left:249.70px;top:339.30px;font-size:7.88px;line-height:7px;color:#3a3a3a;background:#e7f0e0;padding:1.70px 0.8px 0.70px;letter-spacing:0.002px;">Diluted (A/C)</span>
<span class="t" style="right:229.50px;top:339.30px;font-size:7.88px;line-height:7px;color:#222;background:#e7f0e0;padding:1.70px 0.6px 0.70px;font-weight:bold;">8.05</span>
<span class="t" style="right:179.80px;top:339.30px;font-size:7.88px;line-height:7px;color:#555;background:#e7f0e0;padding:1.70px 0.6px 0.70px;">5.76</span>
<span class="t" style="right:130.60px;top:339.30px;font-size:7.88px;line-height:7px;color:#555;background:#e7f0e0;padding:1.70px 0.6px 0.70px;">5.06</span>
<span class="t" style="left:536.10px;top:339.30px;font-size:7.88px;line-height:7px;color:#222;background:#e7f0e0;padding:1.70px 0.5px 0.70px;font-weight:bold;">$</span>
<span class="t" style="left:585.40px;top:339.30px;font-size:7.88px;line-height:7px;color:#555;background:#e7f0e0;padding:1.70px 0.5px 0.70px;">$</span>
<span class="t" style="left:634.90px;top:339.30px;font-size:7.88px;line-height:7px;color:#555;background:#e7f0e0;padding:1.70px 0.5px 0.70px;">$</span>
<span class="t" style="left:249.20px;top:359.60px;font-size:7.88px;line-height:9px;color:#3a3a3a;background:#fffcdc;padding:0.40px 0.8px 0.10px;word-spacing:1.976px;">Anti-dilutive stock-based awards excluded from the calculations of diluted EPS were immaterial during the periods</span>
<span class="t" style="left:249.20px;top:368.60px;font-size:7.88px;line-height:9px;color:#3a3a3a;background:#fffcdc;padding:0.40px 0.8px 0.10px;letter-spacing:-0.079px;">presented.</span>
<span class="t" style="left:378.00px;top:387.60px;font-size:7.88px;line-height:9px;color:#3a3a3a;background:#fffcdc;padding:0.40px 0.8px 0.10px;letter-spacing:-0.015px;text-decoration:underline;">NOTE 3 — OTHER INCOME (EXPENSE), NET</span>
<span class="t" style="left:249.20px;top:403.60px;font-size:7.88px;line-height:9px;color:#3a3a3a;background:#fffcdc;padding:0.40px 0.8px 0.10px;letter-spacing:-0.022px;">The components of other income (expense), net were as follows:</span>
<span class="t" style="left:249.90px;top:420.80px;font-size:5.95px;line-height:4px;color:#222;padding:3.20px 0.6px 0.50px;font-weight:bold;letter-spacing:-0.018px;">(In millions)</span>
<span class="t" style="left:249.90px;top:433.80px;font-size:5.95px;line-height:4px;color:#222;background:#e7f0e0;padding:3.20px 0.6px 0.50px;font-weight:bold;letter-spacing:-0.036px;">Year Ended June 30,</span>
<span class="t" style="right:226.70px;top:433.80px;font-size:5.95px;line-height:4px;color:#222;background:#e7f0e0;padding:3.20px 0.6px 0.50px;font-weight:bold;">2021</span>
<span class="t" style="right:176.60px;top:433.80px;font-size:5.95px;line-height:4px;color:#222;background:#e7f0e0;padding:3.20px 0.6px 0.50px;font-weight:bold;">2020</span>
<span class="t" style="right:129.40px;top:433.80px;font-size:5.95px;line-height:4px;color:#222;background:#e7f0e0;padding:3.20px 0.6px 0.50px;font-weight:bold;">2019</span>
<span class="t" style="left:249.70px;top:445.30px;font-size:7.88px;line-height:7px;color:#3a3a3a;background:#e7f0e0;padding:1.70px 0.8px 0.70px;letter-spacing:-0.015px;">Interest and dividends income</span>
<span class="t" style="right:226.70px;top:445.30px;font-size:7.88px;line-height:7px;color:#222;background:#e7f0e0;padding:1.70px 0.6px 0.70px;font-weight:bold;">2,131</span>
<span class="t" style="right:176.60px;top:445.30px;font-size:7.88px;line-height:7px;color:#555;background:#e7f0e0;padding:1.70px 0.6px 0.70px;">2,680</span>
<span class="t" style="right:129.40px;top:445.30px;font-size:7.88px;line-height:7px;color:#555;background:#e7f0e0;padding:1.70px 0.6px 0.70px;">2,762</span>
<span class="t" style="left:535.10px;top:445.30px;font-size:7.88px;line-height:7px;color:#222;background:#e7f0e0;padding:1.70px 0.5px 0.70px;font-weight:bold;">$</span>
<span class="t" style="left:586.30px;top:445.30px;font-size:7.88px;line-height:7px;color:#555;background:#e7f0e0;padding:1.70px 0.5px 0.70px;">$</span>
<span class="t" style="left:637.30px;top:445.30px;font-size:7.88px;line-height:7px;color:#555;background:#e7f0e0;padding:1.70px 0.5px 0.70px;">$</span>
<span class="t" style="left:249.70px;top:454.30px;font-size:7.88px;line-height:7px;color:#3a3a3a;background:#e7f0e0;padding:1.70px 0.8px 0.70px;">Interest expense</span>
<span class="t" style="right:224.00px;top:454.30px;font-size:7.88px;line-height:7px;color:#222;background:#e7f0e0;padding:1.70px 0.6px 0.70px;font-weight:bold;">(2,346)</span>
<span class="t" style="right:173.90px;top:454.30px;font-size:7.88px;line-height:7px;color:#555;background:#e7f0e0;padding:1.70px 0.6px 0.70px;">(2,591)</span>
<span class="t" style="right:126.70px;top:454.30px;font-size:7.88px;line-height:7px;color:#555;background:#e7f0e0;padding:1.70px 0.6px 0.70px;">(2,686)</span>
<span class="t" style="left:249.70px;top:464.30px;font-size:7.88px;line-height:7px;color:#3a3a3a;background:#e7f0e0;padding:1.70px 0.8px 0.70px;letter-spacing:-0.025px;">Net recognized gains on investments</span>
<span class="t" style="right:226.70px;top:464.30px;font-size:7.88px;line-height:7px;color:#222;background:#e7f0e0;padding:1.70px 0.6px 0.70px;font-weight:bold;">1,232</span>
<span class="t" style="right:176.60px;top:464.30px;font-size:7.88px;line-height:7px;color:#555;background:#e7f0e0;padding:1.70px 0.6px 0.70px;">32</span>
<span class="t" style="right:129.40px;top:464.30px;font-size:7.88px;line-height:7px;color:#555;background:#e7f0e0;padding:1.70px 0.6px 0.70px;">648</span>
<span class="t" style="left:249.70px;top:473.30px;font-size:7.88px;line-height:7px;color:#3a3a3a;background:#e7f0e0;padding:1.70px 0.8px 0.70px;letter-spacing:-0.037px;">Net gains on derivatives</span>
<span class="t" style="right:226.70px;top:473.30px;font-size:7.88px;line-height:7px;color:#222;background:#e7f0e0;padding:1.70px 0.6px 0.70px;font-weight:bold;">17</span>
<span class="t" style="right:176.60px;top:473.30px;font-size:7.88px;line-height:7px;color:#555;background:#e7f0e0;padding:1.70px 0.6px 0.70px;">187</span>
<span class="t" style="right:129.40px;top:473.30px;font-size:7.88px;line-height:7px;color:#555;background:#e7f0e0;padding:1.70px 0.6px 0.70px;">144</span>
<span class="t" style="left:249.70px;top:483.30px;font-size:7.88px;line-height:7px;color:#3a3a3a;background:#e7f0e0;padding:1.70px 0.8px 0.70px;letter-spacing:-0.021px;">Net gains (losses) on foreign currency remeasurements</span>
<span class="t" style="right:226.70px;top:483.30px;font-size:7.88px;line-height:7px;color:#222;background:#e7f0e0;padding:1.70px 0.6px 0.70px;font-weight:bold;">54</span>
<span class="t" style="right:173.90px;top:483.30px;font-size:7.88px;line-height:7px;color:#555;background:#e7f0e0;padding:1.70px 0.6px 0.70px;">(191)</span>
<span class="t" style="right:126.70px;top:483.30px;font-size:7.88px;line-height:7px;color:#555;background:#e7f0e0;padding:1.70px 0.6px 0.70px;">(82)</span>
<span class="t" style="left:249.70px;top:493.30px;font-size:7.88px;line-height:7px;color:#3a3a3a;background:#e7f0e0;padding:1.70px 0.8px 0.70px;letter-spacing:-0.010px;">Other, net</span>
<span class="t" style="right:226.70px;top:493.30px;font-size:7.88px;line-height:7px;color:#222;background:#e7f0e0;padding:1.70px 0.6px 0.70px;font-weight:bold;">98</span>
<span class="t" style="right:173.90px;top:493.30px;font-size:7.88px;line-height:7px;color:#555;background:#e7f0e0;padding:1.70px 0.6px 0.70px;">(40)</span>
<span class="t" style="right:126.70px;top:493.30px;font-size:7.88px;line-height:7px;color:#555;background:#e7f0e0;padding:1.70px 0.6px 0.70px;">(57)</span>
<span class="t" style="left:259.50px;top:506.30px;font-size:7.88px;line-height:7px;color:#3a3a3a;background:#e7f0e0;padding:1.70px 0.8px 0.70px;letter-spacing:0.141px;">Total</span>
<span class="t" style="right:226.70px;top:506.30px;font-size:7.88px;line-height:7px;color:#222;background:#e7f0e0;padding:1.70px 0.6px 0.70px;font-weight:bold;">1,186</span>
<span class="t" style="right:176.60px;top:506.30px;font-size:7.88px;line-height:7px;color:#555;background:#e7f0e0;padding:1.70px 0.6px 0.70px;">77</span>
<span class="t" style="right:129.40px;top:506.30px;font-size:7.88px;line-height:7px;color:#555;background:#e7f0e0;padding:1.70px 0.6px 0.70px;">729</span>
<span class="t" style="left:535.10px;top:506.30px;font-size:7.88px;line-height:7px;color:#222;background:#e7f0e0;padding:1.70px 0.5px 0.70px;font-weight:bold;">$</span>
<span class="t" style="left:586.30px;top:506.30px;font-size:7.88px;line-height:7px;color:#555;background:#e7f0e0;padding:1.70px 0.5px 0.70px;">$</span>
<span class="t" style="left:637.30px;top:506.30px;font-size:7.88px;line-height:7px;color:#555;background:#e7f0e0;padding:1.70px 0.5px 0.70px;">$</span>
<span class="t" style="left:249.20px;top:529.60px;font-size:7.88px;line-height:9px;color:#222;background:#fffcdc;padding:0.40px 0.8px 0.10px;font-weight:bold;letter-spacing:-0.020px;">Net Recognized Gains (Losses) on Investments</span>
<span class="t" style="left:249.20px;top:546.60px;font-size:7.88px;line-height:9px;color:#3a3a3a;background:#fffcdc;padding:0.40px 0.8px 0.10px;letter-spacing:-0.017px;">Net recognized gains (losses) on debt investments were as follows:</span>
<span class="t" style="left:249.90px;top:563.80px;font-size:5.95px;line-height:4px;color:#222;padding:3.20px 0.6px 0.50px;font-weight:bold;letter-spacing:-0.018px;">(In millions)</span>
<span class="t" style="left:249.90px;top:576.80px;font-size:5.95px;line-height:4px;color:#222;background:#e7f0e0;padding:3.20px 0.6px 0.50px;font-weight:bold;letter-spacing:-0.036px;">Year Ended June 30,</span>
<span class="t" style="right:226.40px;top:576.80px;font-size:5.95px;line-height:4px;color:#222;background:#e7f0e0;padding:3.20px 0.6px 0.50px;font-weight:bold;">2021</span>
<span class="t" style="right:176.60px;top:576.80px;font-size:5.95px;line-height:4px;color:#222;background:#e7f0e0;padding:3.20px 0.6px 0.50px;font-weight:bold;">2020</span>
<span class="t" style="right:130.80px;top:576.80px;font-size:5.95px;line-height:4px;color:#222;background:#e7f0e0;padding:3.20px 0.6px 0.50px;font-weight:bold;">2019</span>
<span class="t" style="left:249.70px;top:587.30px;font-size:7.88px;line-height:7px;color:#3a3a3a;background:#e7f0e0;padding:1.70px 0.8px 0.70px;letter-spacing:-0.023px;">Realized gains from sales of available-for-sale securities</span>
<span class="t" style="right:226.40px;top:587.30px;font-size:7.88px;line-height:7px;color:#222;background:#e7f0e0;padding:1.70px 0.6px 0.70px;font-weight:bold;">105</span>
<span class="t" style="right:176.60px;top:587.30px;font-size:7.88px;line-height:7px;color:#555;background:#e7f0e0;padding:1.70px 0.6px 0.70px;">50</span>
<span class="t" style="right:130.80px;top:587.30px;font-size:7.88px;line-height:7px;color:#555;background:#e7f0e0;padding:1.70px 0.6px 0.70px;">12</span>
<span class="t" style="left:536.50px;top:587.30px;font-size:7.88px;line-height:7px;color:#222;background:#e7f0e0;padding:1.70px 0.5px 0.70px;font-weight:bold;">$</span>
<span class="t" style="left:586.30px;top:587.30px;font-size:7.88px;line-height:7px;color:#555;background:#e7f0e0;padding:1.70px 0.5px 0.70px;">$</span>
<span class="t" style="left:637.70px;top:587.30px;font-size:7.88px;line-height:7px;color:#555;background:#e7f0e0;padding:1.70px 0.5px 0.70px;">$</span>
<span class="t" style="left:249.70px;top:596.30px;font-size:7.88px;line-height:7px;color:#3a3a3a;background:#e7f0e0;padding:1.70px 0.8px 0.70px;letter-spacing:-0.016px;">Realized losses from sales of available-for-sale securities</span>
<span class="t" style="right:223.70px;top:596.30px;font-size:7.88px;line-height:7px;color:#222;background:#e7f0e0;padding:1.70px 0.6px 0.70px;font-weight:bold;">(40 )</span>
<span class="t" style="right:173.90px;top:596.30px;font-size:7.88px;line-height:7px;color:#555;background:#e7f0e0;padding:1.70px 0.6px 0.70px;">(37)</span>
<span class="t" style="right:128.10px;top:596.30px;font-size:7.88px;line-height:7px;color:#555;background:#e7f0e0;padding:1.70px 0.6px 0.70px;">(93)</span>
<span class="t" style="left:249.70px;top:606.30px;font-size:7.88px;line-height:7px;color:#3a3a3a;background:#e7f0e0;padding:1.70px 0.8px 0.70px;letter-spacing:-0.021px;">Impairments and allowance for credit losses</span>
<span class="t" style="right:223.70px;top:606.30px;font-size:7.88px;line-height:7px;color:#222;background:#e7f0e0;padding:1.70px 0.6px 0.70px;font-weight:bold;">(2 )</span>
<span class="t" style="right:173.90px;top:606.30px;font-size:7.88px;line-height:7px;color:#555;background:#e7f0e0;padding:1.70px 0.6px 0.70px;">(17)</span>
<span class="t" style="right:128.10px;top:606.30px;font-size:7.88px;line-height:7px;color:#555;background:#e7f0e0;padding:1.70px 0.6px 0.70px;">(16)</span>
<span class="t" style="left:259.50px;top:619.30px;font-size:7.88px;line-height:7px;color:#3a3a3a;background:#e7f0e0;padding:1.70px 0.8px 0.70px;letter-spacing:0.141px;">Total</span>
<span class="t" style="right:226.40px;top:619.30px;font-size:7.88px;line-height:7px;color:#222;background:#e7f0e0;padding:1.70px 0.6px 0.70px;font-weight:bold;">63</span>
<span class="t" style="right:173.90px;top:619.30px;font-size:7.88px;line-height:7px;color:#555;background:#e7f0e0;padding:1.70px 0.6px 0.70px;">(4)</span>
<span class="t" style="right:128.10px;top:619.30px;font-size:7.88px;line-height:7px;color:#555;background:#e7f0e0;padding:1.70px 0.6px 0.70px;">(97)</span>
<span class="t" style="left:536.50px;top:619.30px;font-size:7.88px;line-height:7px;color:#222;background:#e7f0e0;padding:1.70px 0.5px 0.70px;font-weight:bold;">$</span>
<span class="t" style="left:586.30px;top:619.30px;font-size:7.88px;line-height:7px;color:#555;background:#e7f0e0;padding:1.70px 0.5px 0.70px;">$</span>
<span class="t" style="left:637.70px;top:619.30px;font-size:7.88px;line-height:7px;color:#555;background:#e7f0e0;padding:1.70px 0.5px 0.70px;">$</span>
<span class="t" style="left:665.40px;top:723.00px;font-size:6.2px;line-height:5px;color:#8a8886;background:#fffcdc;padding:2.00px 0.6px 0.30px;letter-spacing:0.122px;">61</span>
<span class="t" style="left:82.60px;top:251.00px;font-size:4.6px;line-height:5.52px;color:#fff;font-weight:bold;letter-spacing:-0.214px;opacity:.92;">citi</span>
<span class="t" style="left:28.80px;top:315.00px;font-size:7.7px;line-height:9.24px;color:#605e5c;letter-spacing:-0.135px;">CGME-Pillar... 23.pdf</span>
<span class="t" style="left:46.20px;top:334.00px;font-size:4.9px;line-height:5.88px;color:#111;font-weight:bold;font-family:'Liberation Serif',serif;letter-spacing:0.170px;">NEWS TODAY</span>
<span class="t" style="left:36.00px;top:418.00px;font-size:7.7px;line-height:9.24px;color:#605e5c;letter-spacing:-0.035px;">layout-news.png</span>
<span class="t" style="left:33.60px;top:521.00px;font-size:7.7px;line-height:9.24px;color:#2a6ad6;letter-spacing:0.080px;">layout-report.png</span>
<span class="t" style="left:30.80px;top:624.00px;font-size:7.7px;line-height:9.24px;color:#605e5c;letter-spacing:0.002px;">layout-checklist.jpg</span>
<span class="t" style="left:30.30px;top:342.00px;font-size:6.4px;line-height:7.68px;color:#3b3a39;letter-spacing:-0.154px;">Sample</span>
<span class="t" style="left:30.30px;top:445.00px;font-size:6.4px;line-height:7.68px;color:#3b3a39;letter-spacing:-0.154px;">Sample</span>
<span class="t" style="left:31.00px;top:548.00px;font-size:6.4px;line-height:7.68px;color:#3f7be0;letter-spacing:-0.134px;">Sample</span>
</div>
</body></html>
